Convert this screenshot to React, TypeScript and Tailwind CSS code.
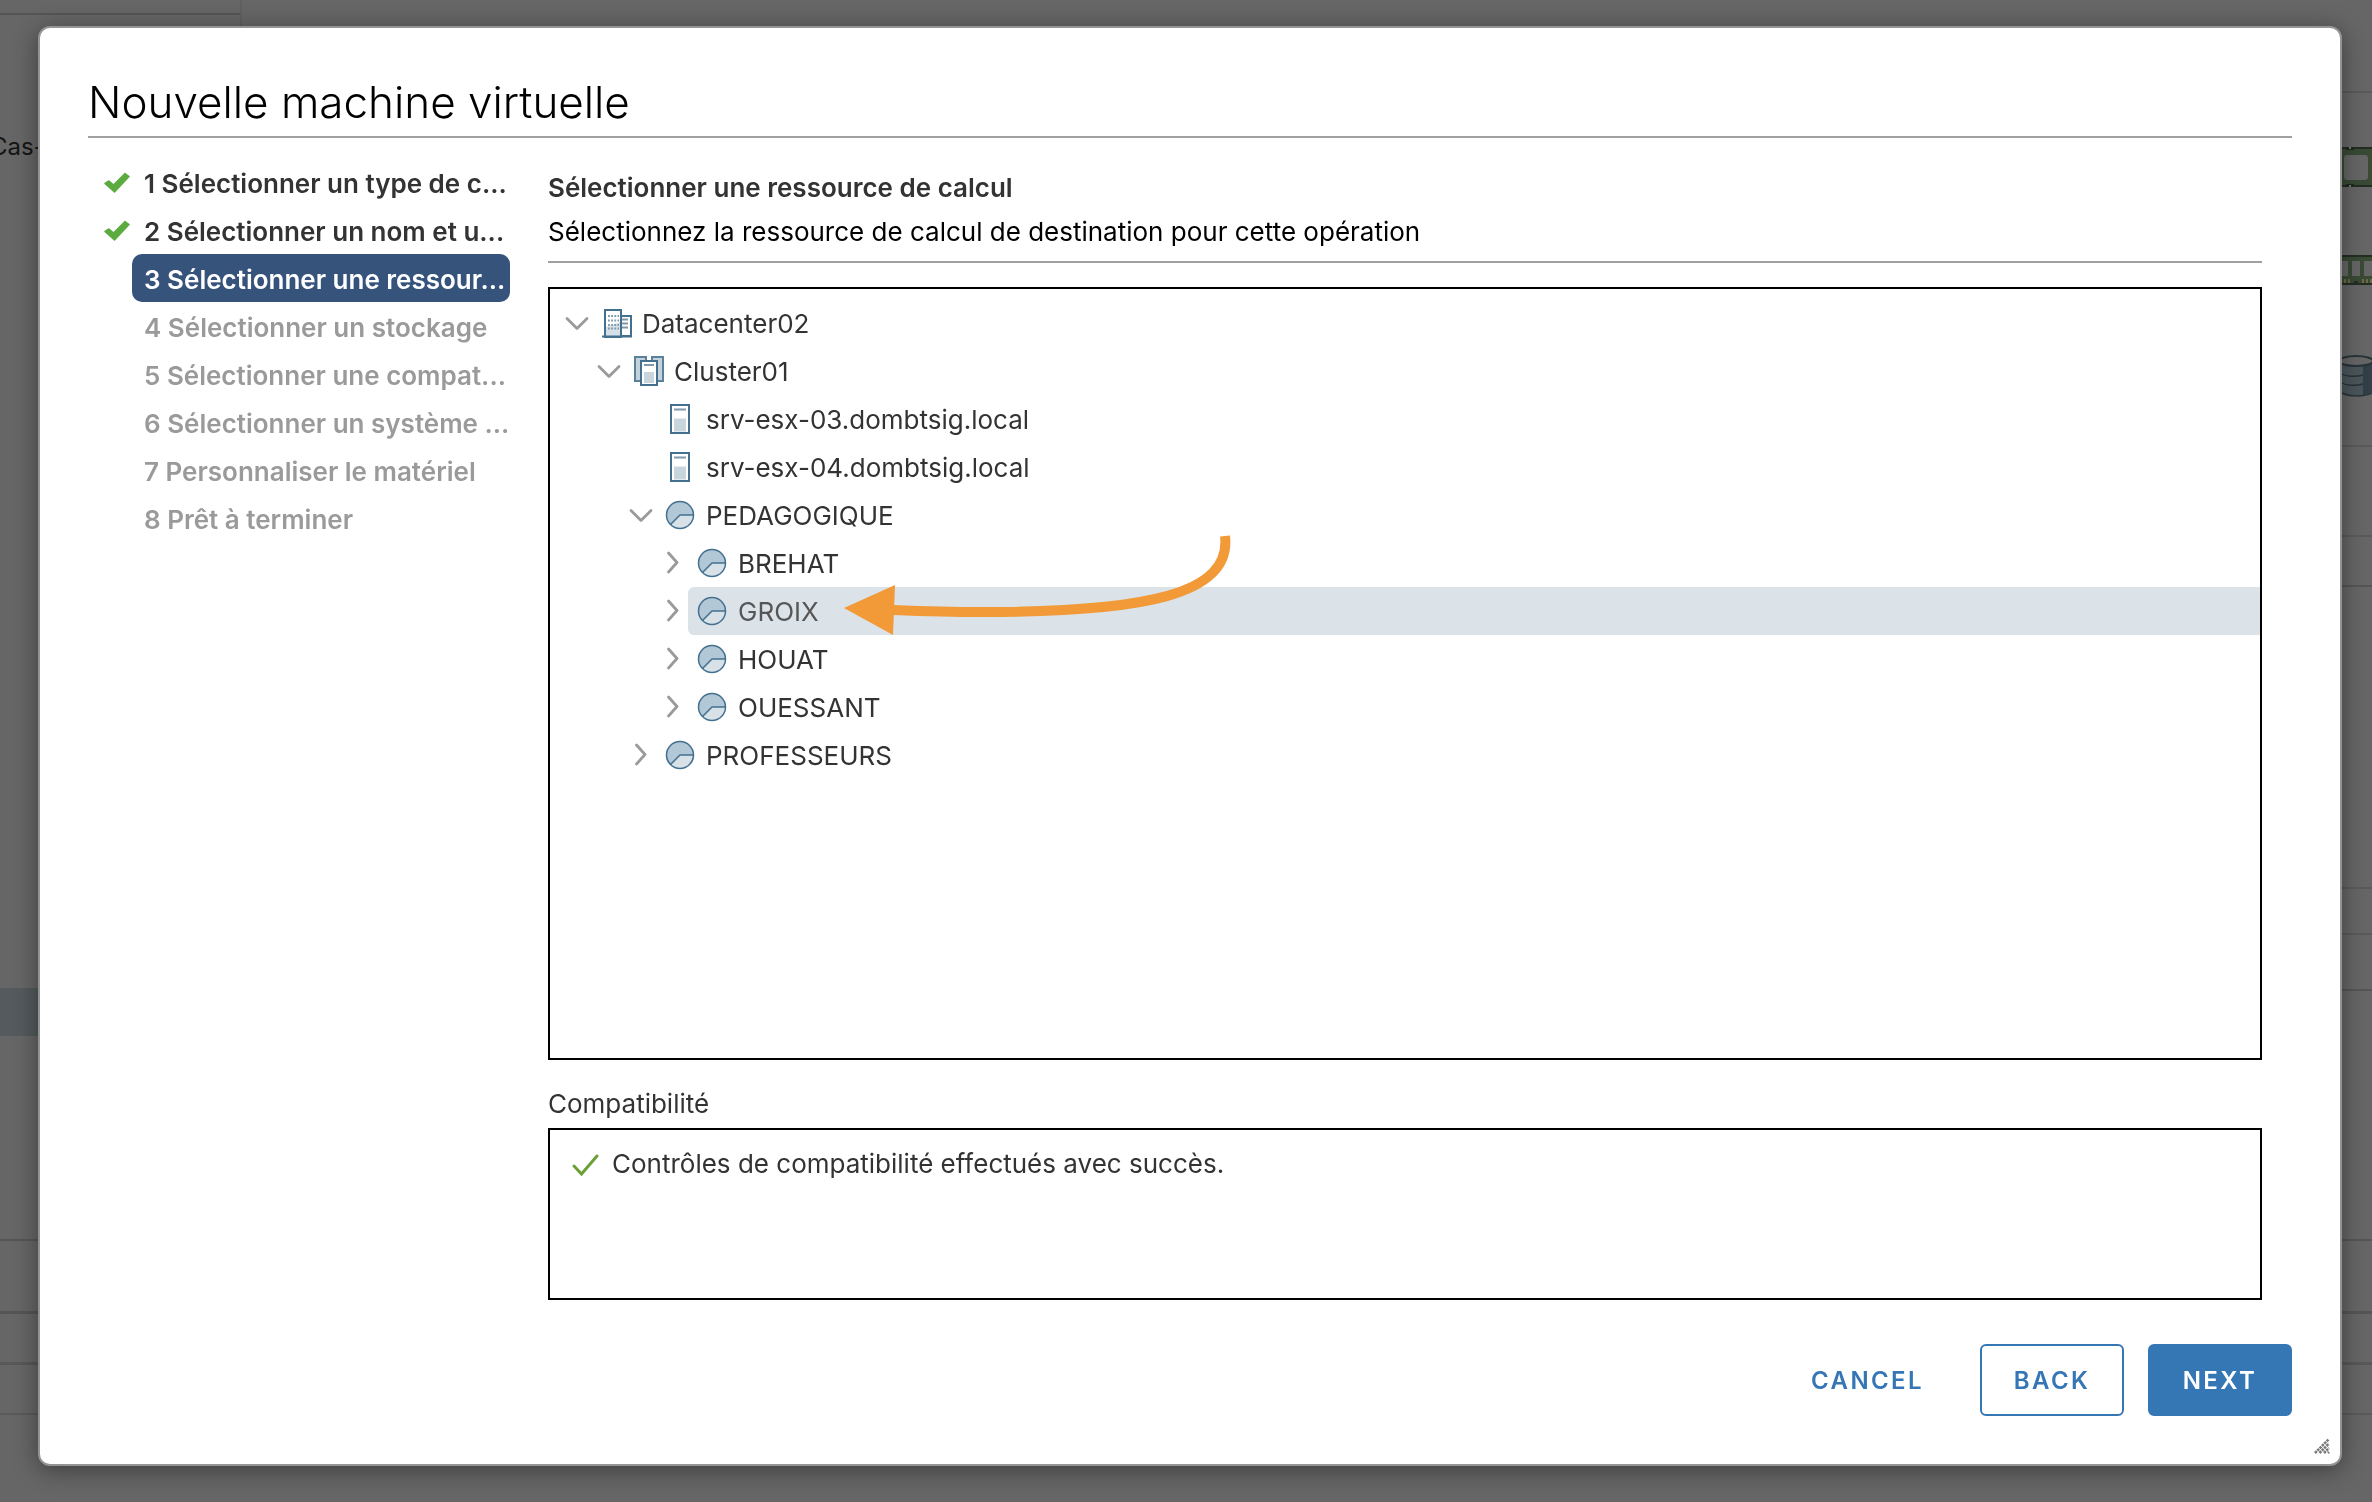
import type { ReactNode } from "react";

type IconKind = "datacenter" | "cluster" | "host" | "pool";

type TreeItem = {
  label: string;
  level: number;
  icon: IconKind;
  state?: "open" | "closed";
  selected?: boolean;
};

const tree: TreeItem[] = [
  { label: "Datacenter02", level: 0, icon: "datacenter", state: "open" },
  { label: "Cluster01", level: 1, icon: "cluster", state: "open" },
  { label: "srv-esx-03.dombtsig.local", level: 2, icon: "host" },
  { label: "srv-esx-04.dombtsig.local", level: 2, icon: "host" },
  { label: "PEDAGOGIQUE", level: 2, icon: "pool", state: "open" },
  { label: "BREHAT", level: 3, icon: "pool", state: "closed" },
  { label: "GROIX", level: 3, icon: "pool", state: "closed", selected: true },
  { label: "HOUAT", level: 3, icon: "pool", state: "closed" },
  { label: "OUESSANT", level: 3, icon: "pool", state: "closed" },
  { label: "PROFESSEURS", level: 2, icon: "pool", state: "closed" },
];

const indent = ["pl-3", "pl-11", "pl-[76px]", "pl-[108px]"];

const steps: { label: string; status: "done" | "current" | "todo" }[] = [
  { label: "1 Sélectionner un type de c...", status: "done" },
  { label: "2 Sélectionner un nom et u...", status: "done" },
  { label: "3 Sélectionner une ressour...", status: "current" },
  { label: "4 Sélectionner un stockage", status: "todo" },
  { label: "5 Sélectionner une compat...", status: "todo" },
  { label: "6 Sélectionner un système ...", status: "todo" },
  { label: "7 Personnaliser le matériel", status: "todo" },
  { label: "8 Prêt à terminer", status: "todo" },
];

const stepStyle = {
  done: "text-[#333333]",
  current: "bg-[#36537c] text-white",
  todo: "text-[#9a9a9a]",
};

function Svg({ children, className }: { children: ReactNode; className?: string }) {
  return (
    <svg viewBox="0 0 32 32" className={className ?? "size-8 shrink-0"} fill="none" aria-hidden="true">
      {children}
    </svg>
  );
}

function TreeIcon({ kind }: { kind: IconKind }) {
  if (kind === "datacenter") {
    return (
      <Svg>
        <path d="M5 3h16v27H5z" fill="#fff" stroke="#44708f" strokeWidth="2" />
        <path d="M6 20l14-5v14H6z" fill="#d6e0e8" />
        <path d="M21 9h10v20H21z" fill="#fff" stroke="#44708f" strokeWidth="2" />
        <path d="M8 9h11M8 13.500h11M8 18h11M8 21.500h11" stroke="#7f98aa" strokeWidth="2" strokeDasharray="1.800 1.400" />
        <path d="M22 12.500h6M22 16.500h6M22 20.500h6" stroke="#7f98aa" strokeWidth="1.800" />
        <path d="M2 29.500h30" stroke="#44708f" strokeWidth="2" />
      </Svg>
    );
  }
  if (kind === "cluster") {
    return (
      <Svg>
        <path d="M3 2h11v24H3zM20 2h11v24H20z" fill="#c3d3de" stroke="#5b8099" strokeWidth="2" />
        <path d="M9 6h16v24H9z" fill="#fff" stroke="#44708f" strokeWidth="2" />
        <path d="M12 10h10" stroke="#7f98aa" strokeWidth="2" />
        <path d="M12 17h10v11H12z" fill="#c9d5dd" />
      </Svg>
    );
  }
  if (kind === "host") {
    return (
      <Svg>
        <path d="M7 2h18v28H7z" fill="#fff" stroke="#44708f" strokeWidth="2" />
        <path d="M10 6.500h12" stroke="#7f98aa" strokeWidth="2" />
        <path d="M10 15.500h12v13H10z" fill="#c9d5dd" />
      </Svg>
    );
  }
  return (
    <Svg>
      <circle cx="16" cy="16" r="13.500" fill="#b3c8d6" />
      <path d="M29.500 16H16L6.500 25.500A13.500 13.500 0 0 0 29.500 16z" fill="#d8e1e8" />
      <circle cx="16" cy="16" r="13.500" stroke="#44708f" strokeWidth="1.500" />
      <path d="M29.500 16H16L6.500 25.500" stroke="#44708f" strokeWidth="1.500" />
    </Svg>
  );
}

function Chevron({ open }: { open: boolean }) {
  return (
    <Svg className="size-8">
      <path d={open ? "M6 11.500 16 21.500 26 11.500" : "M11.500 6 20 15.500 11.500 25"} stroke="#9a9a9a" strokeWidth="2.800" strokeLinecap="round" strokeLinejoin="round" />
    </Svg>
  );
}

function DoneMark() {
  return (
    <Svg className="size-8">
      <path d="M5 17.500l4-2.500 4.500 4L25 7.500l4 3L14.500 26z" fill="#5cab3e" stroke="#5cab3e" strokeWidth="1.500" strokeLinejoin="round" />
    </Svg>
  );
}

function Arrow() {
  return (
    <svg viewBox="0 0 392 104" className="pointer-events-none absolute top-[-52px] left-[156px] h-[104px] w-[392px]" fill="none" aria-hidden="true">
      <path d="M381 1C388 60 300 77 137 77C105 77 75 76 49 75" stroke="#f19a37" strokeWidth="10" />
      <path d="M0 73 51 50 49 100z" fill="#f19a37" />
    </svg>
  );
}

function TreeRow({ item }: { item: TreeItem }) {
  return (
    <li role="treeitem" aria-expanded={item.state ? item.state === "open" : undefined} aria-selected={!!item.selected} className={`flex h-12 items-center ${indent[item.level]}`}>
      <span className="flex w-[30px] shrink-0 justify-center">
        {item.state && (
          <button type="button" aria-label={`${item.state === "open" ? "Réduire" : "Développer"} ${item.label}`} className="-mx-px">
            <Chevron open={item.state === "open"} />
          </button>
        )}
      </span>
      <span className={`relative flex h-12 grow items-center gap-2.5 rounded-l-md pl-2 ${item.selected ? "bg-[#dbe3e9] text-[#565656]" : ""}`}>
        <TreeIcon kind={item.icon} />
        <span>{item.label}</span>
        {item.selected && <Arrow />}
      </span>
    </li>
  );
}

function HardwareIcons() {
  return (
    <>
      <div className="h-[54px]" />
      <svg viewBox="0 0 60 40" className="h-10 w-15" aria-hidden="true">
        <path d="M0 0h60v40H0z" fill="#394a35" />
        <path d="M0 1h60M0 39h60" stroke="#232d22" strokeWidth="2" />
        <rect x="32" y="8" width="24" height="25" rx="3" fill="#666" />
        <path d="M34 0h8v3h-8zM34 37h8v3h-8z" fill="#1f2a1e" />
        <path d="M37 0h2v2h-2zM37 38h2v2h-2z" fill="#777" />
      </svg>
      <div className="h-[68px]" />
      <svg viewBox="0 0 60 30" className="h-[30px] w-15" aria-hidden="true">
        <path d="M0 0h60v30H0z" fill="#394a35" />
        <path d="M0 1h60M0 29h60" stroke="#232d22" strokeWidth="2" />
        <path d="M24 6h12v15H24zM40 6h8v15h-8zM52 6h8v15h-8z" fill="#666" />
        <path d="M32 24h2v4h-2zM36 24h2v4h-2zM50 24h2v4h-2zM54 24h2v4h-2zM58 24h2v4h-2z" fill="#6f6a45" />
        <path d="M42 26h4v4h-4z" fill="#232d22" />
      </svg>
      <div className="h-[70px]" />
      <svg viewBox="0 0 60 42" className="h-[42px] w-15" aria-hidden="true">
        <path d="M28 6v30c8 6 24 6 32 2V6z" fill="#4b565b" />
        <path d="M51 10l9-4v31l-9 3z" fill="#333f46" />
        <ellipse cx="44" cy="6" rx="17" ry="5" fill="#666" stroke="#27333a" strokeWidth="2" />
        <path d="M28 18c6 4 16 4 23 2M28 27c6 4 16 4 23 2M28 37c8 5 24 5 32 1" stroke="#27333a" strokeWidth="1.500" fill="none" />
      </svg>
    </>
  );
}

function Backdrop() {
  return (
    <div aria-hidden="true" className="flex h-screen flex-col overflow-hidden bg-[#666666] text-2xl text-[#151515]">
      <div className="flex h-[1241px] shrink-0 justify-between border-b-2 border-[#555555]">
        <div className="flex w-[242px] flex-col border-r-2 border-[#606060]">
          <div className="h-[15px] shrink-0 border-b-2 border-[#555555]" />
          <div className="h-[108px] shrink-0" />
          <div className="-ml-2.5 flex h-12 shrink-0 items-center">Cas-</div>
          <div className="h-[817px] shrink-0" />
          <div className="h-12 shrink-0 bg-[#545a5d]" />
        </div>
        <div className="flex w-15 flex-col *:shrink-0">
          <div className="h-[93px] border-b-2 border-[#5a5a5a]" />
          <HardwareIcons />
          <div className="h-[50px] border-b-2 border-[#5a5a5a]" />
          <div className="h-[90px] border-b-2 border-[#5a5a5a]" />
          <div className="h-[50px] border-b-2 border-[#555555]" />
          <div className="h-[302px] border-b-2 border-[#5a5a5a]" />
          <div className="h-[46px] border-b-2 border-[#5a5a5a]" />
          <div className="h-14 border-b-2 border-[#555555]" />
        </div>
      </div>
      <div className="h-[73px] shrink-0 border-b-3 border-[#555555]" />
      <div className="h-[51px] shrink-0 border-b-3 border-[#585858]" />
      <div className="h-[50px] shrink-0 border-b-2 border-[#5a5a5a]" />
    </div>
  );
}

const button = "h-[72px] rounded-md border-2 px-[30px] pt-0.5 text-2xl font-semibold tracking-widest";

export default function App() {
  return (
    <div className="font-['Inter',sans-serif]">
      <Backdrop />
      <div className="fixed inset-0 flex pt-[26px] pr-[30px] pb-9 pl-[38px]">
        <div role="dialog" aria-modal="true" aria-labelledby="wizard-title" className="relative flex grow flex-col rounded-xl border-2 border-[#949494] bg-white px-12 pt-12 pb-12 text-[26px] text-[#333333] shadow-[0_4px_24px_rgba(0,0,0,0.4)]">
          <h1 id="wizard-title" className="h-[62px] shrink-0 border-b-2 border-[#a0a0a0] text-[44px] leading-[52px] font-light text-black">
            Nouvelle machine virtuelle
          </h1>
          <div className="flex min-h-0 grow">
            <nav aria-label="Étapes" className="w-[460px] shrink-0 pt-5 pr-[38px]">
              <ol>
                {steps.map((s) => (
                  <li key={s.label} className="flex h-12 items-center">
                    <span className="flex w-11 shrink-0 justify-end">{s.status === "done" && <DoneMark />}</span>
                    <button type="button" disabled={s.status === "todo"} aria-current={s.status === "current" ? "step" : undefined} className={`h-12 grow rounded-[10px] pt-0.5 pl-3 text-left font-semibold whitespace-nowrap ${stepStyle[s.status]}`}>
                      {s.label}
                    </button>
                  </li>
                ))}
              </ol>
            </nav>
            <main className="flex min-w-0 grow flex-col pt-[30px] pr-[30px]">
              <h2 className="leading-10 font-semibold">Sélectionner une ressource de calcul</h2>
              <p className="mt-1 border-b-2 border-[#a0a0a0] pb-[9px] leading-10 text-black">Sélectionnez la ressource de calcul de destination pour cette opération</p>
              <ul role="tree" aria-label="Ressources de calcul" className="mt-6 grow border-2 border-black pt-2.5">
                {tree.map((item) => (
                  <TreeRow key={item.label} item={item} />
                ))}
              </ul>
              <h3 className="mt-6 mb-1 leading-10">Compatibilité</h3>
              <div className="flex h-[172px] shrink-0 items-start gap-2.5 border-2 border-black px-5 pt-3.5">
                <Svg className="mt-1 size-8">
                  <path d="M4 18l7.500 8L27 8" stroke="#6ba039" strokeWidth="3" strokeLinecap="round" />
                </Svg>
                <p className="leading-10">Contrôles de compatibilité effectués avec succès.</p>
              </div>
            </main>
          </div>
          <footer className="mt-11 flex shrink-0 justify-end gap-6 text-[#3577b5]">
            <button type="button" className={`${button} border-transparent`}>CANCEL</button>
            <button type="button" className={`${button} min-w-36 border-[#3577b5]`}>BACK</button>
            <button type="button" className={`${button} min-w-36 border-[#3577b5] bg-[#3577b5] text-white`}>NEXT</button>
          </footer>
          <svg viewBox="0 0 16 16" className="absolute right-2.5 bottom-2.5 size-4" aria-hidden="true">
            <path d="M1 15 15 1M5.500 15 15 5.500M10 15l5-5M14 15l1-1" stroke="#777" strokeWidth="2.500" strokeDasharray="2.500 0.800" />
          </svg>
        </div>
      </div>
    </div>
  );
}
